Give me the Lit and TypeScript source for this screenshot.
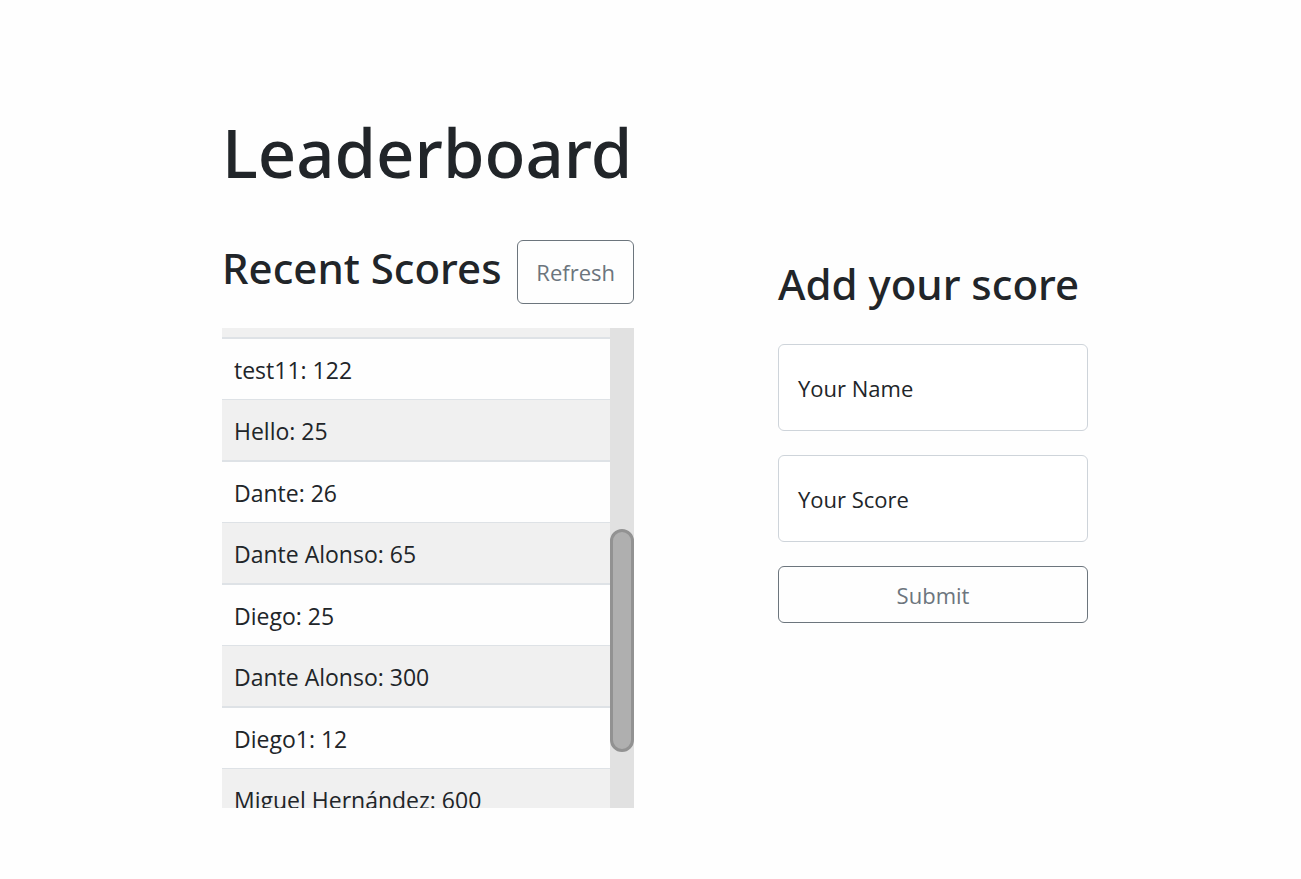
import { LitElement, html, css } from "lit";
import { customElement, property, state } from "lit/decorators.js";

interface Score {
  user: string;
  score: number;
}

const base = css`
  :host {
    display: block;
    box-sizing: border-box;
    font-family: "Open Sans", "Noto Sans", sans-serif;
    color: #212529;
  }
  *,
  *::before,
  *::after {
    box-sizing: border-box;
  }
  h1,
  h2 {
    margin: 0;
    font-family: "Noto Sans", "Open Sans", sans-serif;
    font-weight: 500;
    white-space: nowrap;
  }
  h2 {
    font-size: 42px;
    line-height: 56px;
  }
  button {
    border: 1px solid #6c757d;
    border-radius: 6px;
    background: transparent;
    color: #6c757d;
    font: inherit;
    font-size: 22px;
    line-height: 36px;
    cursor: pointer;
  }
  button:hover {
    background: #6c757d;
    color: #fff;
  }
`;

@customElement("score-list")
export class ScoreList extends LitElement {
  @property({ attribute: false }) scores: Score[] = [];
  /** Scrollbar thumb position and length, in percent of the track. */
  @property({ type: Number }) thumbStart = 0;
  @property({ type: Number }) thumbSize = 100;

  static styles = [
    base,
    css`
      .list {
        display: flex;
        height: 480px;
      }
      .viewport {
        flex: 1;
        overflow: hidden;
      }
      table {
        width: 100%;
        border-collapse: separate;
        border-spacing: 0;
      }
      td {
        height: 61px;
        padding: 13px 12px 11px;
        border-bottom: 1px solid #dee2e6;
        font-size: 23px;
        line-height: 36px;
        vertical-align: middle;
        background: #fefefe;
      }
      tr:nth-child(odd) td {
        height: 62px;
        border-bottom-width: 2px;
        background: #f0f0f0;
      }
      tr.tail td {
        height: 11px;
        padding: 0;
        line-height: 0;
      }
      .track {
        flex: none;
        width: 24px;
        background: #e1e1e1;
      }
      .thumb {
        position: relative;
        border: 3px solid #929292;
        border-radius: 12px;
        background: #afafaf;
      }
    `,
  ];

  render() {
    return html`
      <div class="list">
        <div class="viewport">
          <table aria-label="Recent Scores">
            <tbody>
              <tr class="tail" aria-hidden="true">
                <td></td>
              </tr>
              ${this.scores.map(
                (s) => html`<tr>
                  <td>${s.user}: ${s.score}</td>
                </tr>`,
              )}
            </tbody>
          </table>
        </div>
        <div class="track" aria-hidden="true">
          <div
            class="thumb"
            style="top: ${this.thumbStart}%; height: ${this.thumbSize}%"
          ></div>
        </div>
      </div>
    `;
  }
}

@customElement("score-form")
export class ScoreForm extends LitElement {
  static styles = [
    base,
    css`
      form {
        display: flex;
        flex-direction: column;
        gap: 24px;
        margin-top: 32px;
      }
      .field {
        position: relative;
      }
      input {
        display: block;
        width: 100%;
        height: 87px;
        padding: 36px 20px 12px;
        border: 1px solid #ced4da;
        border-radius: 6px;
        background: #fff;
        color: inherit;
        font: inherit;
        font-size: 22px;
      }
      label {
        position: absolute;
        inset: 0;
        padding: 26px 20px;
        font-size: 22px;
        line-height: 36px;
        pointer-events: none;
      }
      input:focus + label,
      input:not(:placeholder-shown) + label {
        padding-top: 6px;
        font-size: 16px;
        line-height: 24px;
      }
      button {
        height: 57px;
        padding: 0 18px;
      }
    `,
  ];

  render() {
    return html`
      <h2>Add your score</h2>
      <form @submit=${(e: Event) => e.preventDefault()}>
        <div class="field">
          <input id="name" type="text" placeholder=" " />
          <label for="name">Your Name</label>
        </div>
        <div class="field">
          <input id="score" type="text" inputmode="numeric" placeholder=" " />
          <label for="score">Your Score</label>
        </div>
        <button type="submit">Submit</button>
      </form>
    `;
  }
}

@customElement("app-root")
export class AppRoot extends LitElement {
  @state() private scores: Score[] = [
    { user: "test11", score: 122 },
    { user: "Hello", score: 25 },
    { user: "Dante", score: 26 },
    { user: "Dante Alonso", score: 65 },
    { user: "Diego", score: 25 },
    { user: "Dante Alonso", score: 300 },
    { user: "Diego1", score: 12 },
    { user: "Miguel Hernández", score: 600 },
  ];

  static styles = [
    base,
    css`
      :host {
        min-height: 100vh;
        padding: 108px 16px 48px 25px;
        background: #fefefe;
      }
      .columns {
        display: flex;
        flex-wrap: wrap;
        justify-content: center;
        gap: 48px 144px;
      }
      .board {
        width: 412px;
      }
      h1 {
        font-size: 67px;
        line-height: 88px;
      }
      .head {
        display: flex;
        justify-content: space-between;
        align-items: flex-start;
        margin: 44px 0 24px;
      }
      .head button {
        height: 64px;
        padding: 0 18px;
      }
      .entry {
        width: 310px;
        margin-top: 148px;
      }
    `,
  ];

  private refresh() {
    this.scores = [...this.scores];
  }

  render() {
    return html`
      <main class="columns">
        <section class="board">
          <h1>Leaderboard</h1>
          <div class="head">
            <h2>Recent Scores</h2>
            <button type="button" @click=${this.refresh}>Refresh</button>
          </div>
          <score-list
            .scores=${this.scores}
            .thumbStart=${41.8}
            .thumbSize=${46.5}
          ></score-list>
        </section>
        <score-form class="entry"></score-form>
      </main>
    `;
  }
}
